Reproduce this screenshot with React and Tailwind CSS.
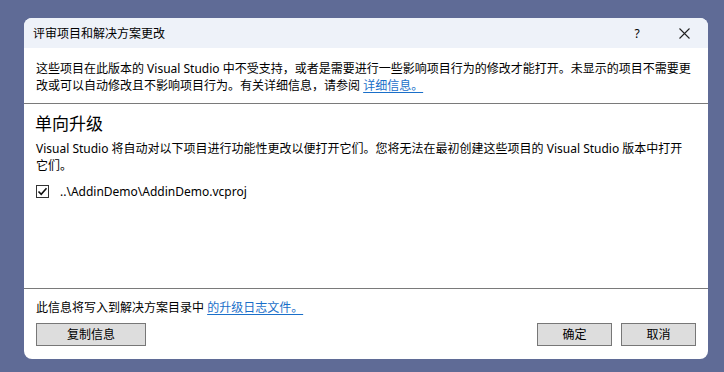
export default function App() {
  const font = "font-['Noto_Sans','Noto_Sans_CJK_SC',sans-serif]";
  return (
    <div className={`w-[724px] h-[372px] bg-[#5f6b96] pl-[24px] pt-[18px] ${font} text-[12px] text-black`}>
      <div className="w-[684px] h-[341px] bg-white rounded-[8px] overflow-hidden flex flex-col">
        {/* Title bar */}
        <div className="h-[30px] bg-[#eef2f9] flex items-center pl-[9px] shrink-0">
          <div className="flex-1 leading-[17px]">评审项目和解决方案更改</div>
          <div className="w-[10px] text-center leading-[17px] mr-[37px]">?</div>
          <svg width="11" height="11" viewBox="0 0 11 11" className="mr-[18px]">
            <path d="M0.5 0.5 L10.5 10.5 M10.5 0.5 L0.5 10.5" stroke="#222" strokeWidth="1.1" fill="none" />
          </svg>
        </div>
        {/* Description */}
        <div className="h-[56px] shrink-0 pt-[12px] pl-[12px] border-b border-[#7a7a7a] leading-[17px]">
          <div className="whitespace-nowrap">这些项目在此版本的 Visual Studio 中不受支持，或者是需要进行一些影响项目行为的修改才能打开。未显示的项目不需要更</div>
          <div className="whitespace-nowrap">
            改或可以自动修改且不影响项目行为。有关详细信息，请参阅{" "}
            <span className="text-[#1a6fc9] underline underline-offset-[2px]">详细信息。 </span>
          </div>
        </div>
        {/* Main */}
        <div className="flex-1 pl-[11px] pt-[8px]">
          <div className="text-[17px] leading-[24px]">单向升级</div>
          <div className="mt-[4px] leading-[17px] pl-[1px]">
            <div className="whitespace-nowrap">Visual Studio 将自动对以下项目进行功能性更改以便打开它们。您将无法在最初创建这些项目的 Visual Studio 版本中打开</div>
            <div className="whitespace-nowrap">它们。</div>
          </div>
          <div className="mt-[9px] flex items-center h-[17px] pl-[1px]">
            <div className="w-[13px] h-[13px] border border-[#333] bg-white flex items-center justify-center">
              <svg width="11" height="11" viewBox="0 0 11 11">
                <path d="M1.5 5.5 L4.2 8.3 L9.5 2.2" stroke="#111" strokeWidth="1.6" fill="none" />
              </svg>
            </div>
            <div className="ml-[11px] leading-[17px]">..\AddinDemo\AddinDemo.vcproj</div>
          </div>
        </div>
        {/* Footer */}
        <div className="h-[71px] shrink-0 border-t border-[#7a7a7a] pt-[10px] px-[12px]">
          <div className="leading-[17px] whitespace-nowrap">
            此信息将写入到解决方案目录中{" "}
            <span className="text-[#1a6fc9] underline underline-offset-[2px]">的升级日志文件。 </span>
          </div>
          <div className="mt-[7px] flex">
            <button className="w-[110px] h-[23px] bg-[#dddddd] border border-[#777] text-[12px] leading-[17px] flex items-center justify-center">复制信息</button>
            <div className="flex-1" />
            <button className="w-[75px] h-[23px] bg-[#dddddd] border border-[#777] text-[12px] leading-[17px] flex items-center justify-center">确定</button>
            <button className="ml-[9px] w-[75px] h-[23px] bg-[#dddddd] border border-[#777] text-[12px] leading-[17px] flex items-center justify-center">取消</button>
          </div>
        </div>
      </div>
    </div>
  );
}
